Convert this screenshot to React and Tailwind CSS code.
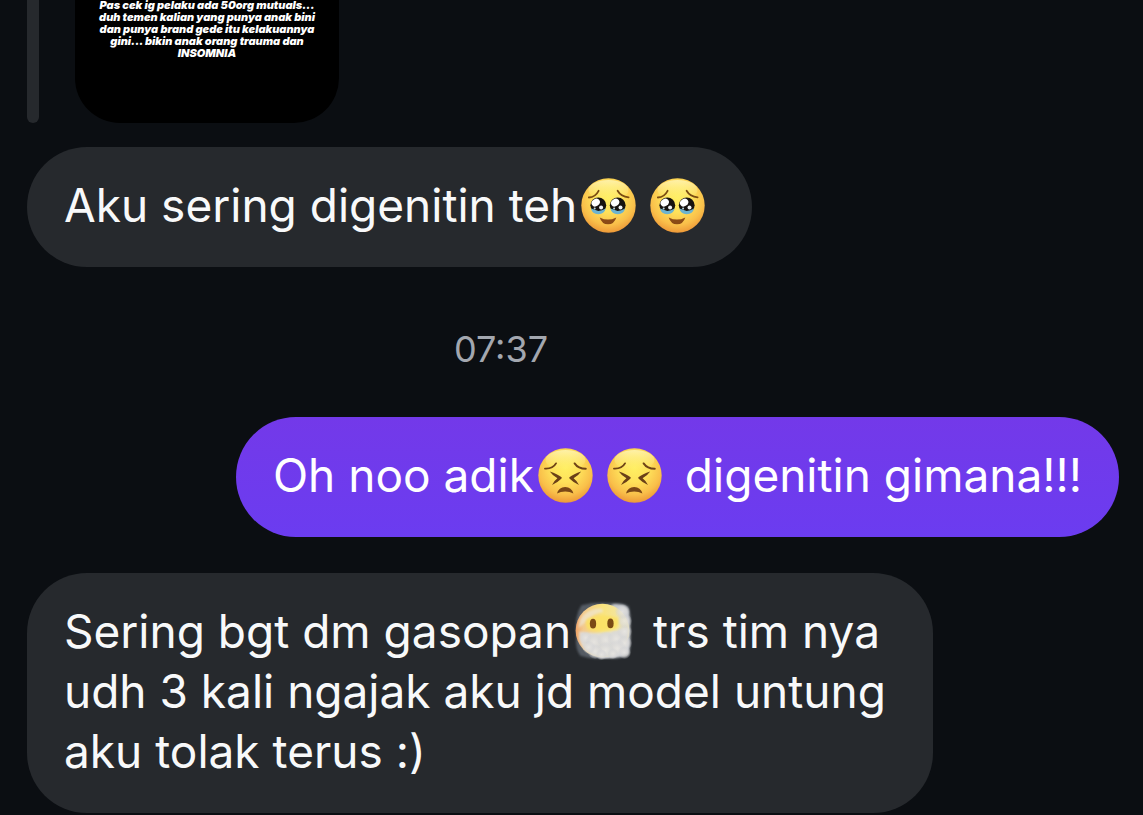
function FaceGradient({ id }) {
  return (
    <defs>
      <radialGradient id={id} cx="50%" cy="36%" r="66%">
        <stop offset="0%" stopColor="#ffef62" />
        <stop offset="40%" stopColor="#fee15a" />
        <stop offset="75%" stopColor="#f9bf4a" />
        <stop offset="100%" stopColor="#ec9436" />
      </radialGradient>
      <linearGradient id={id + "-shine"} x1="0" y1="0" x2="0" y2="1">
        <stop offset="0%" stopColor="#fff9c4" stopOpacity="0.75" />
        <stop offset="100%" stopColor="#fff38a" stopOpacity="0" />
      </linearGradient>
    </defs>
  );
}

function TearyFace({ id }) {
  return (
    <svg role="img" aria-label="Face holding back tears" viewBox="0 0 55 55" className="-mt-2 mr-2.5 ml-1 inline-block size-[55px]">
      <FaceGradient id={id} />
      <circle cx="27.5" cy="27.5" r="27.2" fill={`url(#${id})`} />
      <ellipse cx="27.5" cy="12" rx="20" ry="10" fill={`url(#${id}-shine)`} />
      {[17.3, 36.7].map((x) => (
        <g key={x}>
          <circle cx={x} cy="27.3" r="7.9" fill="#17130f" />
          <path d={`M${x - 7.4} 30.4 Q${x - 3.5} 31.5 ${x} 33 Q${x + 3.5} 32.6 ${x + 7.4} 30.4 Q${x + 6} 36 ${x} 36.2 Q${x - 6} 36 ${x - 7.4} 30.4Z`} fill="#6cb3d0" />
          <ellipse cx={x - 2.6} cy="24.6" rx="4.4" ry="3.6" fill="#fff" transform={`rotate(-35 ${x - 2.6} 24.6)`} />
          <circle cx={x + 2.8} cy="29.6" r="2" fill="#f1f5f7" />
          <circle cx={x - 3.6} cy="30.6" r="1" fill="#bcd6e2" />
        </g>
      ))}
      <path d="M7.8 19.5Q14.5 19 17.6 12.8M36.6 12.8Q40 18.8 47.6 19.3" fill="none" stroke="#7b4c12" strokeWidth="1.8" strokeLinecap="round" />
      <path d="M18.7 39.4Q27 43.8 35.3 39.4Q33.2 46.2 27 46.2Q20.8 46.2 18.7 39.4Z" fill="#8a4a16" />
    </svg>
  );
}

function PerseveringFace({ id }) {
  return (
    <svg role="img" aria-label="Persevering face" viewBox="0 0 55 55" className="-mt-2 mr-2.5 ml-1 inline-block size-[55px]">
      <FaceGradient id={id} />
      <circle cx="27.5" cy="27.5" r="27.2" fill={`url(#${id})`} />
      <ellipse cx="27.5" cy="12" rx="20" ry="10" fill={`url(#${id}-shine)`} />
      <g fill="none" stroke="#6f4417" strokeWidth="1.9" strokeLinecap="round">
        <path d="M7 20.6Q14.8 21 18 15.4" />
        <path d="M36.6 15.4Q40.2 20.8 47.8 20.8" />
      </g>
      <path d="M11.8 23.6Q19.5 26.2 23.6 29.3Q24 30 23.3 30.7Q19 35 14 37Q15.7 33 19.4 30.2Q14.6 27.8 11.8 23.6Z" fill="#6a4018" />
      <path d="M43.2 23.6Q35.5 26.2 31.4 29.3Q31 30 31.7 30.7Q36 35 41 37Q39.3 33 35.6 30.2Q40.4 27.8 43.2 23.6Z" fill="#6a4018" />
      <path d="M19 45.6Q20.8 39 27.2 39Q33.6 39 35.4 45.6Q31.8 43.4 27.2 43.4Q22.6 43.4 19 45.6Z" fill="#7a4717" />
    </svg>
  );
}

function CloudFace() {
  const puffs = [
    [12, 35, 6], [20, 39, 8], [31, 37, 8], [41, 36, 8], [49, 29, 7], [49, 40, 7], [42, 45, 8],
    [31, 47, 8], [21, 48, 7], [49, 19, 7], [47, 10, 7], [49, 49, 6], [38, 50, 5], [15, 44, 6], [27, 51, 5],
  ];
  return (
    <svg role="img" aria-label="Face in clouds" viewBox="0 0 57 57" className="-mt-2 mr-[7px] ml-0.5 inline-block size-[60px]">
      <defs>
        <linearGradient id="cloud-face" x1="0" y1="0" x2="1" y2="0">
          <stop offset="0%" stopColor="#eea266" />
          <stop offset="14%" stopColor="#f3c98c" />
          <stop offset="50%" stopColor="#f9e37c" />
          <stop offset="100%" stopColor="#efe6b8" />
        </linearGradient>
        <radialGradient id="cloud-puff">
          <stop offset="0%" stopColor="#e8e6e3" stopOpacity="0.8" />
          <stop offset="55%" stopColor="#dcdbda" stopOpacity="0.7" />
          <stop offset="100%" stopColor="#cfd1d6" stopOpacity="0.1" />
        </radialGradient>
        <filter id="cloud-soft" x="-10%" y="-10%" width="120%" height="120%">
          <feGaussianBlur stdDeviation="1.2" />
        </filter>
      </defs>
      <g filter="url(#cloud-soft)">
        <path d="M8 4Q20 1 34 2Q48 1 53 5Q56 16 54 28Q56 42 53 51Q46 56 32 54Q18 56 7 52Q2 46 3 34Q1 14 8 4Z" fill="#68707a" fillOpacity="0.7" />
        <path d="M38 3Q50 2 53 9Q56 30 53 50Q46 55 26 54L10 44L10 34Z" fill="#c6c9cd" />
      </g>
      <circle cx="28" cy="28" r="25.5" fill="url(#cloud-face)" />
      <path d="M7 17Q14 7 26 7Q30 8 28 11Q20 12 14 18Q10 22 5 26Z" fill="#efe6cf" fillOpacity="0.75" filter="url(#cloud-soft)" />
      <path d="M6 29Q28 33 52 25L52 46Q44 54 30 54Q10 52 6 36Z" fill="#dedddb" fillOpacity="0.9" filter="url(#cloud-soft)" />
      {puffs.map(([x, y, r]) => (
        <circle key={`${x}-${y}`} cx={x} cy={y} r={r} fill="url(#cloud-puff)" />
      ))}
      <path d="M13 17Q28 11 42 16Q45 21 41 26Q28 29 14 27Q11 22 13 17Z" fill="#fbe263" fillOpacity="0.85" filter="url(#cloud-soft)" />
      <ellipse cx="19" cy="21.5" rx="3" ry="4.6" fill="#7a4a14" />
      <ellipse cx="35.6" cy="21.3" rx="3" ry="4.6" fill="#7a4a14" />
    </svg>
  );
}

function Bubble({ mine, children }) {
  return (
    <p
      className={
        "w-fit max-w-[83%] rounded-[60px] px-[37px] pt-7 pb-8 text-[46px] leading-[60px] " +
        (mine ? "self-end bg-linear-to-b from-[#7339e9] to-[#6b3cf0] text-white" : "self-start bg-[#26292d] text-[#f8f9fa]")
      }
    >
      {children}
    </p>
  );
}

export default function App() {
  return (
    <main className="flex min-h-screen flex-col overflow-hidden bg-[#0b0e12] pr-6 pb-[3px] pl-[27px] font-['Inter',sans-serif]">
      <div className="flex h-[123px] items-end gap-9 overflow-hidden">
        <div className="h-full w-3 shrink-0 rounded-b-full bg-[#26292d]" />
        <blockquote className="w-[264px] shrink-0 rounded-[45px] bg-black pt-16 pb-16 text-center text-[11px] leading-3 font-black whitespace-nowrap text-white italic">
          Pas cek ig pelaku ada 50org mutuals...
          <br />
          duh temen kalian yang punya anak bini
          <br />
          dan punya brand gede itu kelakuannya
          <br />
          gini... bikin anak orang trauma dan
          <br />
          INSOMNIA
        </blockquote>
      </div>

      <div className="mt-6 flex flex-col">
        <Bubble>
          Aku sering digenitin teh
          <TearyFace id="teary-a" />
          <TearyFace id="teary-b" />
        </Bubble>
        <time className="mt-[70px] mb-14 self-center pr-36 text-[36px] leading-6 text-[#a3a7af]">07:37</time>
        <Bubble mine>
          Oh noo adik
          <PerseveringFace id="persevere-a" />
          <PerseveringFace id="persevere-b" /> digenitin gimana!!!
        </Bubble>
        <div className="h-9" />
        <Bubble>
          Sering bgt dm gasopan
          <CloudFace /> trs tim nya udh 3 kali ngajak aku jd model untung aku tolak terus :)
        </Bubble>
      </div>
    </main>
  );
}
